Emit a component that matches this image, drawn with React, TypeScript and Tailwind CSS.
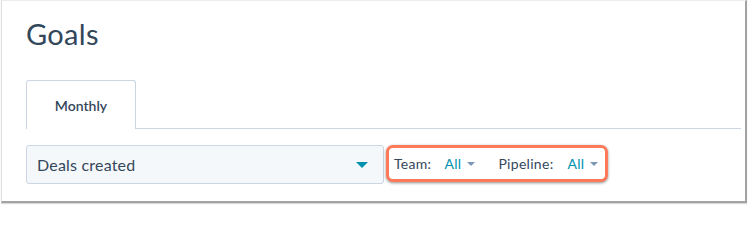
const Caret = ({ className }: { className: string }) => (
  <svg viewBox="0 0 10 5" className={className} aria-hidden="true">
    <path d="M0 0h10L5 5z" fill="currentColor" />
  </svg>
);

export default function App() {
  return (
    <div className="h-[205px] w-[748px] bg-white font-['Lato','Liberation_Sans',sans-serif] text-[#33475b]">
      <div className="ml-[1px] h-[203px] w-[746px] border-b-2 border-l border-r-2 border-t border-b-[#a3a3a3] border-l-[#dedede] border-r-[#a3a3a3] border-t-[#ececec] pl-[24px] pr-[4px] shadow-[0_1px_1px_rgba(0,0,0,0.15)]">
        {/* Header */}
        <h1 className="pt-[15px] text-[29px] font-normal leading-[36px] tracking-[0.3px]">Goals</h1>

        {/* Tabs */}
        <div className="mt-[28px] flex">
          <div className="flex h-[49px] w-[110px] items-center justify-center rounded-t-[3px] border border-b-0 border-[#cbd6e2] bg-white text-[14px] font-semibold">
            Monthly
          </div>
          <div className="flex-1 border-b border-[#cbd6e2]" />
        </div>

        {/* Filters */}
        <div className="mt-[16px] flex items-start gap-[2px]">
          <div className="flex h-[39px] w-[358px] items-center justify-between rounded-[3px] border border-[#cbd6e2] bg-[#f5f8fa] pl-[10px] pr-[15px]">
            <span className="text-[16px] tracking-[0.2px]">Deals created</span>
            <Caret className="h-[6px] w-[12px] text-[#0091ae]" />
          </div>
          <div className="flex h-[37px] w-[222px] items-center rounded-[7px] border-[3px] border-[#ff7a59] bg-white pl-[5px] text-[14px] tracking-[0.3px] shadow-[0_1px_3px_rgba(0,0,0,0.45)]">
            <span>Team:</span>
            <span className="ml-[13px] text-[#0091ae]">All</span>
            <Caret className="ml-[6px] h-[4px] w-[8px] text-[#7c98b6]" />
            <span className="ml-[23px]">Pipeline:</span>
            <span className="ml-[14px] text-[#0091ae]">All</span>
            <Caret className="ml-[6px] h-[4px] w-[8px] text-[#7c98b6]" />
          </div>
        </div>
      </div>
    </div>
  );
}
